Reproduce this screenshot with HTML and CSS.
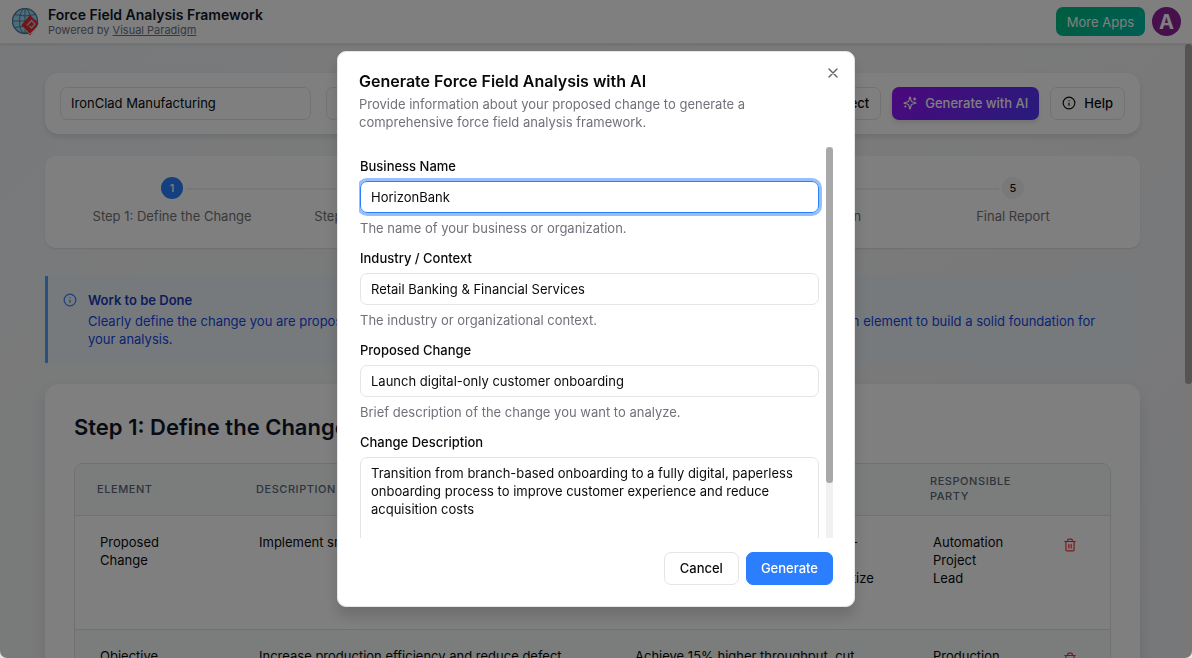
FILE: index.html
```html
<!DOCTYPE html>
<html lang="en">
<head>
  <meta charset="UTF-8">
  <meta name="viewport" content="width=device-width, initial-scale=1">
  <title>Force Field Analysis Framework</title>
  <link rel="stylesheet" href="styles.css">
</head>
<body>
  <div class="app">
    <header class="topbar">
      <svg class="logo" viewBox="0 0 28 28" width="28" height="28" aria-hidden="true">
        <circle cx="13" cy="13" r="12.5" fill="#9fd8f5" stroke="#4d7f9f" stroke-width="1.4"/>
        <g fill="none" stroke="#4f819f" stroke-width="1">
          <ellipse cx="13" cy="13" rx="5.5" ry="12.5"/>
          <path d="M13 .5v25M.5 13h25M2.500 6.500q10.500 3 21 0M2.500 19.500q10.500-3 21 0"/>
        </g>
        <path d="M18 7l8.500 8.500L18 27.500 9.500 17z" fill="#e9292f"/>
        <path d="M15 17.500l4.500-5 3.500 3.500-3.500 4-2-2" fill="none" stroke="#b9c4cc" stroke-width="1.500"/>
        <path d="M11 19.500l7 6.500 7-7" fill="none" stroke="#d8c4c6" stroke-width="1"/>
      </svg>
      <div class="brand">
        <h1>Force Field Analysis Framework</h1>
        <p>Powered by <a href="#">Visual Paradigm</a></p>
      </div>
      <button class="more-btn" type="button">More Apps</button>
      <button class="avatar" type="button" aria-label="Account">A</button>
    </header>

    <div class="viewport">
      <main class="content">
        <section class="card toolbar">
          <input class="input company" type="text" aria-label="Company" value="IronClad Manufacturing">
          <input class="input project" type="text" aria-label="Project" value="Smart Factory Rollout">
          <button class="btn" type="button">Load Project</button>
          <button class="btn ai-btn" type="button">
            <svg class="icon" viewBox="0 0 24 24" aria-hidden="true"><path d="M9.900 15.500A2 2 0 0 0 8.500 14.100l-6.100-1.600a.5.5 0 0 1 0-1L8.500 9.900A2 2 0 0 0 9.900 8.500l1.600-6.100a.5.5 0 0 1 1 0l1.600 6.100a2 2 0 0 0 1.400 1.400l6.100 1.600a.5.5 0 0 1 0 1l-6.100 1.600a2 2 0 0 0-1.400 1.400l-1.600 6.100a.5.5 0 0 1-1 0zM20 3v4M22 5h-4M4 17v2M5 18H3"/></svg>
            Generate with AI
          </button>
          <button class="btn" type="button">
            <svg class="icon" viewBox="0 0 24 24" aria-hidden="true"><circle cx="12" cy="12" r="10"/><path d="M12 16v-4M12 8h.01"/></svg>
            Help
          </button>
        </section>

        <ol class="card steps">
          <li class="step active"><span class="dot">1</span>Step 1: Define the Change</li>
          <li class="step"><span class="dot">2</span>Step 2: Driving Forces</li>
          <li class="step"><span class="dot">3</span>Step 3: Restraining Forces</li>
          <li class="step"><span class="dot">4</span>Strategies &amp; Action</li>
          <li class="step"><span class="dot">5</span>Final Report</li>
        </ol>

        <section class="note">
          <svg class="icon" viewBox="0 0 24 24" aria-hidden="true"><circle cx="12" cy="12" r="10"/><path d="M12 16v-4M12 8h.01"/></svg>
          <div>
            <h2>Work to be Done</h2>
            <p>Clearly define the change you are proposing, including its main objective, scope, impact and timeline. Provide details for each element to build a solid foundation for your analysis.</p>
          </div>
        </section>

        <section class="card panel">
          <h2>Step 1: Define the Change</h2>
          <div class="table-wrap">
            <table>
              <colgroup>
                <col class="col-element">
                <col class="col-description">
                <col>
                <col class="col-party">
                <col class="col-action">
              </colgroup>
              <thead>
                <tr>
                  <th>Element</th>
                  <th>Description</th>
                  <th>Rationale</th>
                  <th>Responsible Party</th>
                  <th></th>
                </tr>
              </thead>
              <tbody>
                <tr>
                  <td>Proposed<br>Change</td>
                  <td>Implement smart automation on lines</td>
                  <td>Cut manual handling and lost paper-<br>based reporting,<br>streamline work flows and fully digitize</td>
                  <td>Automation<br>Project<br>Lead</td>
                  <td class="action">
                    <button class="trash" type="button" aria-label="Delete row">
                      <svg class="icon" viewBox="0 0 24 24" aria-hidden="true"><path d="M3 6h18M19 6v14a2 2 0 0 1-2 2H7a2 2 0 0 1-2-2V6M8 6V4a2 2 0 0 1 2-2h4a2 2 0 0 1 2 2v2M10 11v6M14 11v6"/></svg>
                    </button>
                  </td>
                </tr>
                <tr>
                  <td>Objective</td>
                  <td>Increase production efficiency and reduce defect<br>rates</td>
                  <td>Achieve 15% higher throughput, cut<br>defects</td>
                  <td>Production<br>Manager</td>
                  <td class="action">
                    <button class="trash" type="button" aria-label="Delete row">
                      <svg class="icon" viewBox="0 0 24 24" aria-hidden="true"><path d="M3 6h18M19 6v14a2 2 0 0 1-2 2H7a2 2 0 0 1-2-2V6M8 6V4a2 2 0 0 1 2-2h4a2 2 0 0 1 2 2v2M10 11v6M14 11v6"/></svg>
                    </button>
                  </td>
                </tr>
              </tbody>
            </table>
          </div>
        </section>
      </main>
      <div class="scrollbar"><div class="thumb page-thumb"></div></div>
    </div>
  </div>

  <div class="overlay">
    <div class="modal" role="dialog" aria-modal="true" aria-labelledby="modal-title">
      <button class="close" type="button" aria-label="Close">
        <svg class="icon" viewBox="0 0 24 24" aria-hidden="true"><path d="M18 6L6 18M6 6l12 12"/></svg>
      </button>
      <div class="modal-head">
        <h2 id="modal-title">Generate Force Field Analysis with AI</h2>
        <p>Provide information about your proposed change to generate a comprehensive force field analysis framework.</p>
      </div>
      <div class="modal-body">
        <form class="fields">
          <div class="field">
            <label for="business">Business Name</label>
            <input class="input focused" id="business" type="text" value="HorizonBank">
            <p>The name of your business or organization.</p>
          </div>
          <div class="field">
            <label for="industry">Industry / Context</label>
            <input class="input" id="industry" type="text" value="Retail Banking &amp; Financial Services">
            <p>The industry or organizational context.</p>
          </div>
          <div class="field">
            <label for="change">Proposed Change</label>
            <input class="input" id="change" type="text" value="Launch digital-only customer onboarding">
            <p>Brief description of the change you want to analyze.</p>
          </div>
          <div class="field">
            <label for="description">Change Description</label>
            <textarea class="input" id="description">Transition from branch-based onboarding to a fully digital, paperless onboarding process to improve customer experience and reduce acquisition costs</textarea>
          </div>
        </form>
        <div class="scrollbar"><div class="thumb modal-thumb"></div></div>
      </div>
      <div class="modal-foot">
        <button class="btn" type="button">Cancel</button>
        <button class="btn primary" type="button">Generate</button>
      </div>
    </div>
  </div>
</body>
</html>
```

FILE: styles.css
```css
* {
  box-sizing: border-box;
}

html {
  background: #e4e4e4;
}

body {
  margin: 0;
  height: 100vh;
  overflow: hidden;
  font-family: Inter, "Liberation Sans", sans-serif;
  font-size: 13px;
  line-height: 18px;
  color: #0a0a0a;
}

h1, h2, p, ol {
  margin: 0;
}

button, input, textarea {
  font: inherit;
  color: inherit;
}

.icon {
  width: 14px;
  height: 14px;
  flex: none;
  fill: none;
  stroke: currentColor;
  stroke-width: 2;
  stroke-linecap: round;
  stroke-linejoin: round;
}

.app {
  height: 100%;
  display: flex;
  flex-direction: column;
  overflow: hidden;
  background: linear-gradient(135deg, #f0f3f6, #f5f5f5 50%, #eef0f4);
  border-radius: 0 0 7px 7px;
}

/* top bar */
.topbar {
  position: relative;
  display: flex;
  align-items: center;
  flex: none;
  height: 44px;
  padding: 0 11px 0 12px;
  background: #fff;
  border-bottom: 1px solid #e5e7eb;
  box-shadow: 0 1px 3px rgba(0, 0, 0, 0.1);
}

.logo {
  margin-right: 8px;
}

.brand {
  flex: 1;
}

.brand h1 {
  font-size: 14px;
  line-height: 16px;
  font-weight: 600;
  color: #0f172a;
}

.brand p {
  font-size: 11px;
  line-height: 14px;
  color: #6a7282;
}

.brand a {
  color: inherit;
}

.more-btn {
  height: 29px;
  padding: 0 11px;
  border: 0;
  border-radius: 7px;
  background: linear-gradient(135deg, #00bc7d, #00bba7);
  color: #fff;
}

.avatar {
  width: 29px;
  height: 29px;
  margin-left: 7px;
  padding: 0;
  border: 0;
  border-radius: 50%;
  background: #8e1e98;
  color: #fff;
  font-size: 20px;
  font-weight: 700;
}

.viewport {
  display: flex;
  flex: 1;
  min-height: 0;
}

.content {
  flex: 1;
  min-width: 0;
  padding: 29px 45px 0;
  overflow: hidden;
}

.scrollbar {
  flex: none;
  width: 7px;
  background: #f1f1f1;
}

.thumb {
  background: #a8a8a8;
  border-radius: 4px;
}

.page-thumb {
  height: 340px;
}

.modal-thumb {
  height: 86%;
}

.card {
  background: #fff;
  border-radius: 14px;
  box-shadow: 0 3px 6px rgba(0, 0, 0, 0.1);
}

.input {
  width: 100%;
  height: 33px;
  padding: 0 10px 1px;
  border: 1px solid #e5e5e5;
  border-radius: 7px;
  background: transparent;
  outline: none;
}

.btn {
  display: flex;
  align-items: center;
  justify-content: center;
  gap: 8px;
  height: 33px;
  padding: 0 15px 2px;
  border: 1px solid #e5e5e5;
  border-radius: 7px;
  background: #fff;
  font-weight: 500;
  white-space: nowrap;
}

/* toolbar */
.toolbar {
  display: flex;
  gap: 11px;
  padding: 14px 15px;
  margin-bottom: 22px;
}

.toolbar .btn {
  padding: 0 11px 1px;
}

.toolbar .company {
  width: 251px;
  margin-right: 4px;
}

.toolbar .project {
  flex: 1;
}

.toolbar .ai-btn {
  border: 0;
  background: linear-gradient(135deg, #9810fa, #4f39f6);
  box-shadow: 0 3px 5px rgba(0, 0, 0, 0.1);
  color: #fff;
}

/* steps */
.steps {
  display: flex;
  height: 92px;
  padding: 21px 22px;
  margin-bottom: 28px;
  list-style: none;
  border-radius: 10px;
  box-shadow: 0 1px 2px rgba(0, 0, 0, 0.1);
}

.step {
  position: relative;
  flex: 1;
  display: flex;
  flex-direction: column;
  align-items: center;
  gap: 8px;
  color: #737373;
}

.step:not(:last-child)::after {
  content: "";
  position: absolute;
  top: 11px;
  left: calc(50% + 14px);
  width: calc(100% - 28px);
  height: 2px;
  background: #f1f1f1;
}

.dot {
  width: 22px;
  height: 22px;
  border-radius: 50%;
  background: #f2f2f2;
  color: #171717;
  font-size: 11px;
  line-height: 22px;
  font-weight: 500;
  text-align: center;
}

.active .dot {
  background: #2b7fff;
  color: #fff;
}

/* work to be done */
.note {
  display: flex;
  gap: 11px;
  padding: 15px 30px 15px 15px;
  min-height: 87px;
  margin-bottom: 21px;
  border-left: 3px solid #51a2ff;
  border-radius: 0 10px 10px 0;
  background: #eff4fa;
  color: #1447e6;
}

.note .icon {
  margin-top: 2px;
  color: #2b7fff;
}

.note h2 {
  font-size: 13px;
  line-height: 18px;
  font-weight: 600;
  color: #193cb8;
  margin-bottom: 3px;
}

/* step panel */
.panel {
  padding: 29px;
  box-shadow: 0 8px 16px rgba(0, 0, 0, 0.1);
}

.panel h2 {
  font-size: 22px;
  line-height: 28px;
  font-weight: 600;
  color: #0f172a;
  margin-bottom: 22px;
}

.table-wrap {
  border: 1px solid #dfe2e4;
  border-radius: 9px;
  overflow: hidden;
}

table {
  width: 100%;
  table-layout: fixed;
  border-collapse: collapse;
}

.col-element {
  width: 159px;
}

.col-description {
  width: 376px;
}

.col-party {
  width: 122px;
}

.col-action {
  width: 80px;
}

th {
  height: 51px;
  padding: 0 0 0 22px;
  background: #f4faf8;
  font-size: 11px;
  line-height: 15px;
  font-weight: 500;
  letter-spacing: 0.05em;
  text-align: left;
  text-transform: uppercase;
  color: #5f6878;
}

td {
  height: 114px;
  padding: 17px 0 0 25px;
  border-top: 1px solid #dfe2e4;
  vertical-align: top;
}

tbody tr:nth-child(even) {
  background: #f4faf8;
}

.action {
  padding: 22px 0 0;
  text-align: center;
}

.trash {
  padding: 0;
  border: 0;
  background: none;
  color: #fb2c36;
}

/* dialog */
.overlay {
  position: fixed;
  inset: 0;
  z-index: 10;
  display: flex;
  align-items: center;
  justify-content: center;
  background: rgba(0, 0, 0, 0.5);
  border-radius: 0 0 7px 7px;
}

.modal {
  position: relative;
  display: flex;
  flex-direction: column;
  width: 518px;
  max-width: 90%;
  max-height: calc(100% - 102px);
  padding: 20px 21px 21px;
  border: 1px solid #e5e5e5;
  border-radius: 9px;
  background: #fff;
  box-shadow: 0 9px 14px rgba(0, 0, 0, 0.15);
}

.close {
  position: absolute;
  top: 13px;
  right: 13px;
  display: flex;
  padding: 0;
  border: 0;
  background: none;
  color: #606060;
}

.close .icon {
  width: 16px;
  height: 16px;
}

.modal-head {
  margin-bottom: 16px;
  padding-right: 60px;
  color: #71717b;
}

.modal-head h2 {
  font-size: 16px;
  line-height: 18px;
  font-weight: 600;
  color: #0a0a0a;
  margin-bottom: 5px;
}

.modal-body {
  display: flex;
  flex: 1;
  min-height: 0;
}

.fields {
  flex: 1;
  display: flex;
  flex-direction: column;
  gap: 12px;
  padding: 10px 7px 0 1px;
  overflow: hidden;
}

.field {
  flex: none;
  display: flex;
  flex-direction: column;
  gap: 6px;
}

.field label {
  font-weight: 500;
}

.field .input {
  height: 32px;
}

.field p {
  color: #71717b;
}

.field .focused {
  border-color: #2b7fff;
  box-shadow: 0 0 0 3px rgba(43, 127, 255, 0.5);
}

.field textarea.input {
  height: 110px;
  padding: 6px 10px;
  resize: none;
}

.modal-foot {
  display: flex;
  justify-content: flex-end;
  gap: 7px;
  padding-top: 14px;
}

.modal-foot .primary {
  padding: 0 14px 2px;
  border-color: #2b7fff;
  background: #2b7fff;
  color: #fff;
}
```
